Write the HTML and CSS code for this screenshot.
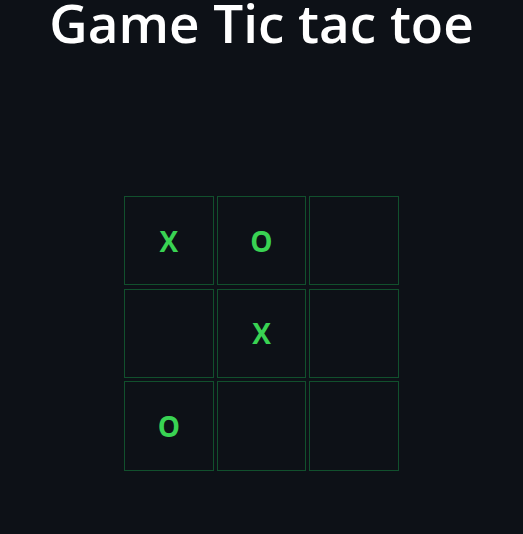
FILE: index.html
```html
<!DOCTYPE html>
<html>
<head>
<meta charset="utf-8">
<link rel="stylesheet" href="styles.css">
</head>
<body>
<div class="page">
  <h1 class="title">Game Tic tac toe</h1>
  <div class="board">
    <div class="cell">X</div>
    <div class="cell">O</div>
    <div class="cell"></div>
    <div class="cell"></div>
    <div class="cell">X</div>
    <div class="cell"></div>
    <div class="cell">O</div>
    <div class="cell"></div>
    <div class="cell"></div>
  </div>
</div>
</body>
</html>
```
FILE: styles.css
```css
html, body {
  margin: 0;
  padding: 0;
  background: #0d1117;
}
.page {
  width: 523px;
  height: 534px;
  display: flex;
  flex-direction: column;
  align-items: center;
  font-family: "Open Sans", "Noto Sans", sans-serif;
}
.title {
  margin: 0;
  color: #ffffff;
  font-size: 53px;
  font-weight: 600;
  line-height: 45px;
}
.board {
  margin-top: 151px;
  display: grid;
  grid-template-columns: repeat(3, 89.34px);
  grid-template-rows: repeat(3, 89.34px);
  gap: 3.3px;
}
.cell {
  box-sizing: border-box;
  border: 1px solid #11502d;
  display: flex;
  align-items: center;
  justify-content: center;
  color: #39d353;
  font-size: 28px;
  font-weight: 700;
}
```
